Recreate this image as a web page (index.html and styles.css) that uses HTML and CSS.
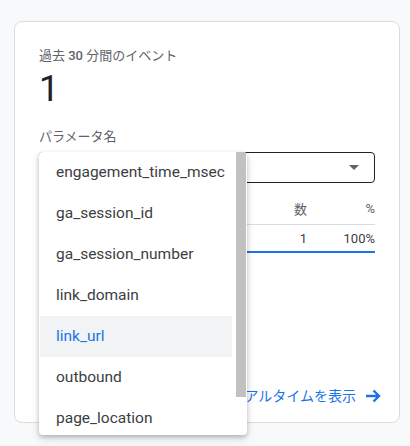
FILE: index.html
```html
<!DOCTYPE html>
<html lang="ja">
<head>
<meta charset="utf-8">
<link rel="stylesheet" href="styles.css">
</head>
<body>
<div class="card">
  <div class="title">過去 <span class="num-em">30</span> 分間のイベント</div>
  <div class="count">1</div>
  <div class="label">パラメータ名</div>
  <div class="select-wrap">
    <div class="select">
      <span class="select-value"></span>
      <span class="caret"></span>
    </div>
    <div class="menu">
      <ul class="menu-list">
        <li class="menu-item">engagement_time_msec</li>
        <li class="menu-item">ga_session_id</li>
        <li class="menu-item">ga_session_number</li>
        <li class="menu-item">link_domain</li>
        <li class="menu-item active">link_url</li>
        <li class="menu-item">outbound</li>
        <li class="menu-item">page_location</li>
      </ul>
      <div class="scroll-track"><div class="scroll-thumb"></div></div>
    </div>
  </div>
  <div class="table">
    <div class="row head">
      <div class="cell name"></div>
      <div class="cell num">数</div>
      <div class="cell pct">%</div>
    </div>
    <div class="row data">
      <div class="cell name"></div>
      <div class="cell num">1</div>
      <div class="cell pct">100%</div>
    </div>
  </div>
  <div class="footer">
    <a class="link">リアルタイムを表示
      <svg class="arrow" width="16" height="14" viewBox="0 0 16 14"><path d="M1 7h13M8.5 1.5L14 7l-5.5 5.5" fill="none" stroke="#1a73e8" stroke-width="2.4"/></svg>
    </a>
  </div>
</div>
</body>
</html>
```
FILE: styles.css
```css
html, body {
  margin: 0;
  padding: 0;
}
body {
  background: #f8f9fa;
  font-family: Roboto, "Noto Sans CJK JP", sans-serif;
  color: #202124;
  width: 410px;
  height: 446px;
  overflow: hidden;
}
.card {
  box-sizing: border-box;
  margin: 21px 0 0 14px;
  width: 386px;
  height: 402px;
  background: #fff;
  border: 1px solid #dadce0;
  border-radius: 8px;
  padding: 24px 24px 16px 24px;
  display: flex;
  flex-direction: column;
}
.title {
  font-size: 13px;
  line-height: 20px;
  color: #5f6368;
}
.num-em {
  font-weight: 500;
}
.count {
  margin-top: 3px;
  font-size: 36px;
  line-height: 40px;
  color: #202124;
}
.label {
  margin-top: 18px;
  font-size: 13px;
  line-height: 20px;
  color: #5f6368;
}
.select-wrap {
  position: relative;
  margin-top: 5px;
}
.select {
  box-sizing: border-box;
  height: 31px;
  border: 1px solid #202124;
  border-radius: 4px;
  display: flex;
  align-items: center;
  justify-content: flex-end;
  padding-right: 15px;
}
.caret {
  width: 0;
  height: 0;
  border-left: 5px solid transparent;
  border-right: 5px solid transparent;
  border-top: 5px solid #5f6368;
}
.menu {
  position: absolute;
  top: 0;
  left: 0;
  width: 208px;
  height: 283px;
  background: #fff;
  border-radius: 4px;
  box-shadow: 0 2px 4px rgba(0,0,0,0.2), 0 4px 10px rgba(0,0,0,0.12);
  display: flex;
  overflow: hidden;
  z-index: 2;
}
.menu-list {
  list-style: none;
  margin: 0;
  padding: 0 0 0 1px;
  flex: 1;
}
.menu-item {
  height: 41px;
  line-height: 41px;
  padding-left: 16px;
  font-size: 15.5px;
  color: #3c4043;
  white-space: nowrap;
}
.menu-item.active {
  background: #f1f3f4;
  color: #1a73e8;
}
.scroll-track {
  width: 15px;
  display: flex;
  justify-content: center;
  padding-left: 3px;
  box-sizing: border-box;
}
.scroll-thumb {
  width: 10px;
  height: 245px;
  background: #c1c1c1;
}
.table {
  margin-top: 10px;
  font-size: 13px;
  color: #3c4043;
}
.row {
  display: flex;
  align-items: center;
}
.row.head {
  height: 31px;
  border-bottom: 1px solid #dadce0;
  color: #5f6368;
}
.row.data {
  height: 26px;
  border-bottom: 2px solid #1a73e8;
}
.cell.name {
  flex: 1;
}
.cell.num {
  width: 60px;
  text-align: right;
}
.cell.pct {
  width: 68px;
  text-align: right;
}
.footer {
  margin-top: auto;
  display: flex;
  justify-content: flex-end;
  margin-right: -6px;
}
.link {
  display: flex;
  align-items: center;
  gap: 9px;
  font-size: 14px;
  line-height: 20px;
  color: #1a73e8;
  text-decoration: none;
}
.arrow {
  display: block;
}
```
